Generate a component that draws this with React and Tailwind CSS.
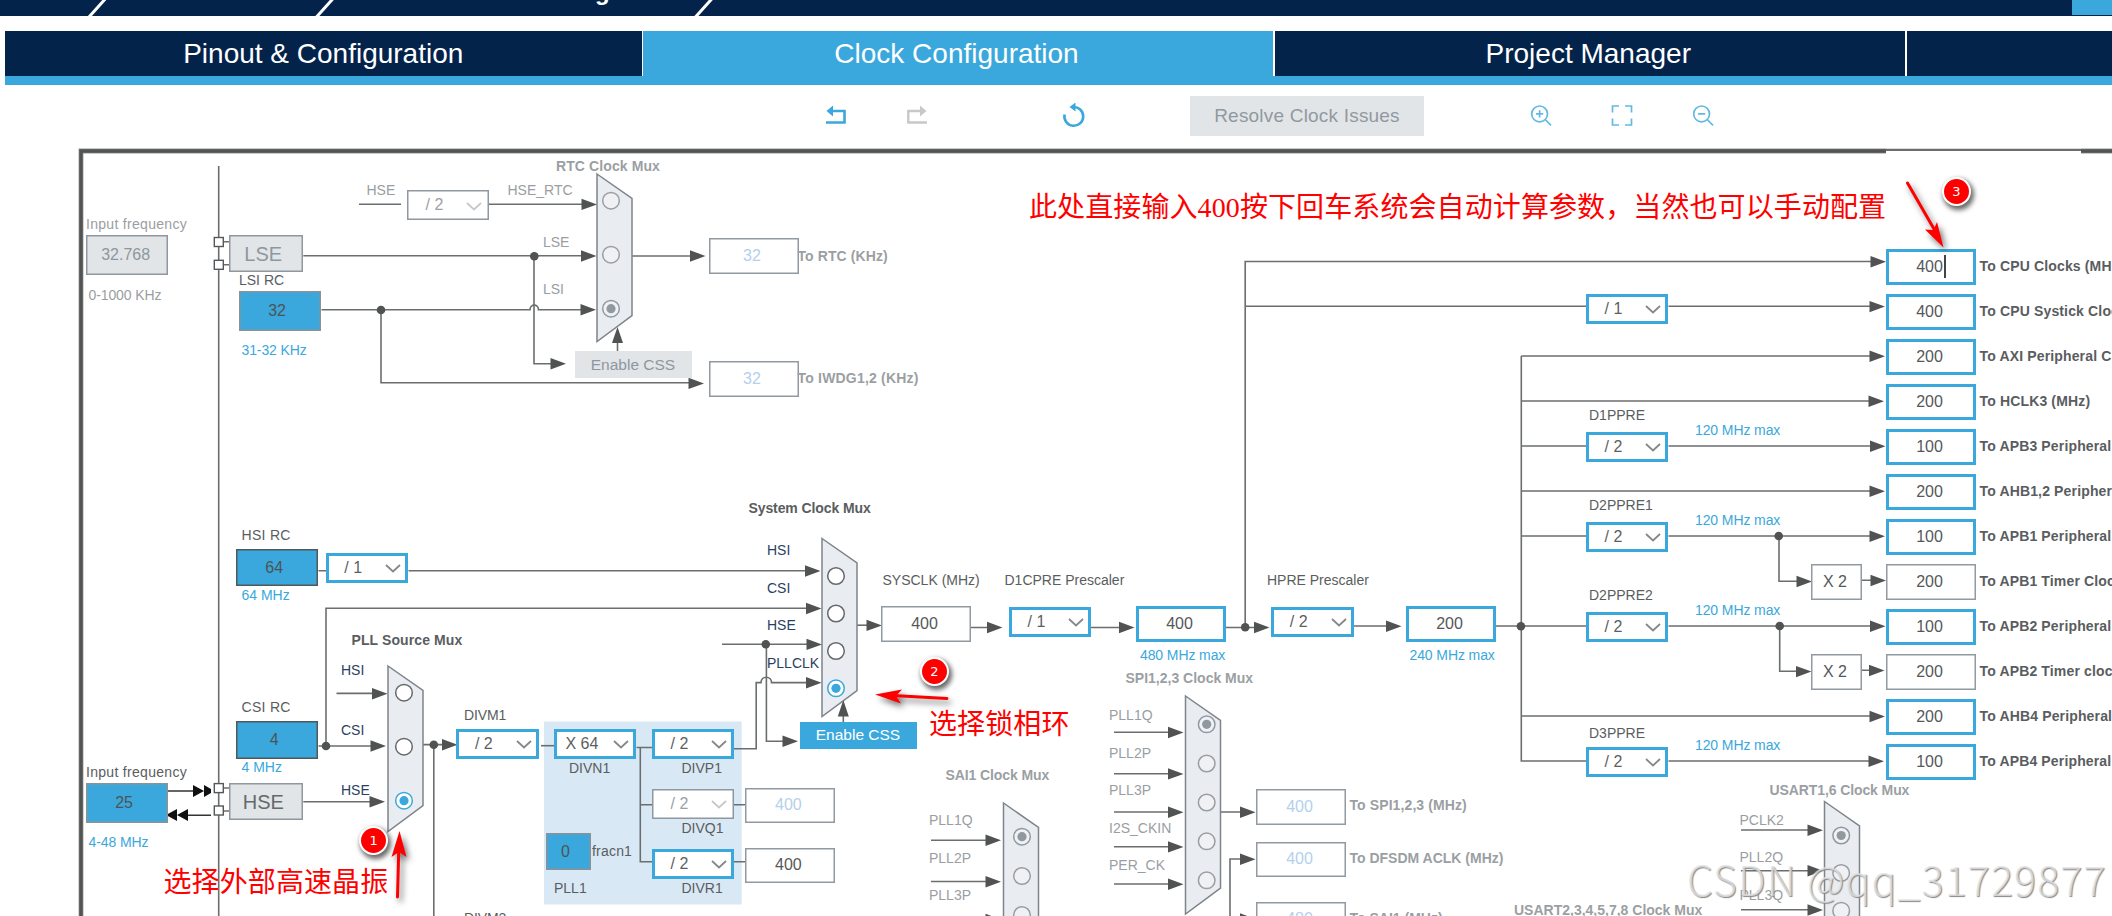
import React from "react";

const LINE = "#6b6e6f";
const ARROW = "#505352";
const BLUE = "#3aa8dc";

const fieldStyles = {
  off: "bg-[#e1e5e8] text-[#8f979e] shadow-[inset_0_0_0_1.5px_#8f989f] pr-[3px]",
  source: "bg-[#3aa8dc] text-[#4c5456] shadow-[inset_0_0_0_1.5px_#8a9298] pr-[6px]",
  sourceDark: "bg-[#3aa8dc] text-[#4c5456] shadow-[inset_0_0_0_1.5px_#50585a] pr-[6px]",
  pale: "bg-white text-[#b4d0ec] shadow-[inset_0_0_0_1.5px_#929aa1] pr-[3px]",
  plain: "bg-white text-[#55585a] shadow-[inset_0_0_0_1.5px_#929aa1] pr-[3px]",
  active: "bg-white text-[#55585a] shadow-[inset_0_0_0_3px_#3aa8dc] pr-[3px]",
};

// [x, y, w, h, kind, value]
const fields = [
  [86, 235.2, 82.4, 40.3, "off", "32.768"],
  [239, 291, 82.2, 40, "source", "32"],
  [708.5, 238.3, 90, 35.6, "pale", "32"],
  [708.5, 361.2, 90, 35.6, "pale", "32"],
  [236, 549, 82.3, 37, "sourceDark", "64"],
  [236, 721.3, 82.3, 37.3, "sourceDark", "4"],
  [86, 783, 82.2, 40, "source", "25"],
  [546, 833, 45, 37, "source", "0"],
  [881, 606, 90, 35.6, "plain", "400"],
  [744.9, 787.5, 90, 35.6, "pale", "400"],
  [744.9, 847.5, 90, 35.6, "plain", "400"],
  [1136, 606, 90, 35.6, "active", "400"],
  [1406, 606, 90, 35.6, "active", "200"],
  [1256, 789.2, 90, 35.6, "pale", "400"],
  [1256, 841.5, 90, 35.6, "pale", "400"],
  [1256, 901.5, 90, 35.6, "pale", "480"],
  [1811, 564, 51, 35.6, "plain", "X 2"],
  [1811, 654, 51, 35.6, "plain", "X 2"],
];

const outputs = [
  ["400", "To CPU Clocks (MHz)"],
  ["400", "To CPU Systick Clocks (MHz)"],
  ["200", "To AXI Peripheral Clocks (MHz)"],
  ["200", "To HCLK3 (MHz)"],
  ["100", "To APB3 Peripheral Clocks (MHz)"],
  ["200", "To AHB1,2 Peripheral Clocks (MHz)"],
  ["100", "To APB1 Peripheral Clocks (MHz)"],
  ["200", "To APB1 Timer Clocks (MHz)", true],
  ["100", "To APB2 Peripheral Clocks (MHz)"],
  ["200", "To APB2 Timer clocks (MHz)", true],
  ["200", "To AHB4 Peripheral Clocks (MHz)"],
  ["100", "To APB4 Peripheral Clocks (MHz)"],
];

// [x, y, value, disabled]
const selects = [
  [407, 190.3, "/ 2", true],
  [325.8, 553.2, "/ 1"],
  [456.4, 729, "/ 2"],
  [554, 729, "X 64"],
  [652, 729, "/ 2"],
  [652, 789, "/ 2", true],
  [652, 849, "/ 2"],
  [1009, 607.2, "/ 1"],
  [1271.3, 607.2, "/ 2"],
  [1586, 294, "/ 1"],
  [1586, 432, "/ 2"],
  [1586, 522, "/ 2"],
  [1586, 612, "/ 2"],
  [1586, 747, "/ 2"],
];

const tones = {
  dark: "text-[#5a5d60]",
  gray: "text-[#9a9ea2]",
  navy: "text-[#2b3f63]",
  blue: "text-[#3aa8dc]",
  title: "text-[#5a5d60] font-bold",
  grayTitle: "text-[#9b9fa3] font-bold",
};

// [x, baseline, text, tone, letter spacing]
const labels = [
  [86, 229.3, "Input frequency", "gray", 0.3],
  [88.5, 299.7, "0-1000 KHz", "gray", -0.1],
  [239, 284.7, "LSI RC", "dark"],
  [241.5, 355, "31-32 KHz", "blue", -0.1],
  [366.5, 194.7, "HSE", "gray"],
  [507.5, 194.7, "HSE_RTC", "gray"],
  [543, 247, "LSE", "gray"],
  [543, 294, "LSI", "gray"],
  [556, 170.5, "RTC Clock Mux", "grayTitle", 0.1],
  [797.5, 261, "To RTC (KHz)", "grayTitle", 0.1],
  [797.5, 382.6, "To IWDG1,2 (KHz)", "grayTitle", 0.2],
  [241.5, 540.2, "HSI RC", "dark", 0.3],
  [241.5, 600, "64 MHz", "blue"],
  [241.5, 712.2, "CSI RC", "dark", 0.3],
  [241.5, 772.4, "4 MHz", "blue"],
  [351.5, 645, "PLL Source Mux", "title", 0.1],
  [341, 674.8, "HSI", "navy"],
  [341, 735, "CSI", "navy"],
  [341, 795, "HSE", "navy"],
  [86, 777, "Input frequency", "dark", 0.3],
  [88.5, 847.3, "4-48 MHz", "blue", -0.1],
  [464, 720, "DIVM1", "dark", -0.1],
  [464, 922.6, "DIVM2", "dark", -0.1],
  [569, 772.7, "DIVN1", "dark"],
  [681.5, 772.7, "DIVP1", "dark"],
  [681.5, 832.7, "DIVQ1", "dark"],
  [681.5, 892.7, "DIVR1", "dark"],
  [592, 855.5, "fracn1", "dark", 0.2],
  [554, 892.5, "PLL1", "dark"],
  [748.5, 512.8, "System Clock Mux", "title", -0.1],
  [767, 555, "HSI", "navy"],
  [767, 592.5, "CSI", "navy"],
  [767, 630, "HSE", "navy"],
  [767, 667.5, "PLLCLK", "navy"],
  [882.5, 585, "SYSCLK (MHz)", "dark"],
  [1004.5, 585, "D1CPRE Prescaler", "dark"],
  [1267, 585, "HPRE Prescaler", "dark"],
  [1140, 660, "480 MHz max", "blue", -0.1],
  [1409.5, 660, "240 MHz max", "blue", -0.1],
  [1125.5, 682.5, "SPI1,2,3 Clock Mux", "grayTitle"],
  [1109, 720, "PLL1Q", "gray"],
  [1109, 757.5, "PLL2P", "gray"],
  [1109, 795, "PLL3P", "gray"],
  [1109, 832.5, "I2S_CKIN", "gray"],
  [1109, 870, "PER_CK", "gray"],
  [1349.5, 810, "To SPI1,2,3 (MHz)", "grayTitle", 0.1],
  [1349.5, 862.5, "To DFSDM ACLK (MHz)", "grayTitle"],
  [1349.5, 922.5, "To SAI1 (MHz)", "grayTitle"],
  [945.5, 780, "SAI1 Clock Mux", "grayTitle", -0.1],
  [929, 825, "PLL1Q", "gray"],
  [929, 862.5, "PLL2P", "gray"],
  [929, 900, "PLL3P", "gray"],
  [1589, 419.7, "D1PPRE", "dark"],
  [1589, 509.7, "D2PPRE1", "dark"],
  [1589, 599.7, "D2PPRE2", "dark"],
  [1589, 737.7, "D3PPRE", "dark"],
  [1695, 435, "120 MHz max", "blue", -0.1],
  [1695, 525, "120 MHz max", "blue", -0.1],
  [1695, 615, "120 MHz max", "blue", -0.1],
  [1695, 750, "120 MHz max", "blue", -0.1],
  [1769.5, 794.5, "USART1,6 Clock Mux", "grayTitle", -0.1],
  [1514, 915, "USART2,3,4,5,7,8 Clock Mux", "grayTitle"],
  [1739.5, 824.5, "PCLK2", "gray"],
  [1739.5, 862, "PLL2Q", "gray"],
  [1739.5, 899.7, "PLL3Q", "gray"],
];

// Trapezoids with their radio buttons: x, top, bottom, radio x, radio ys
const muxes = [
  { x: 597, top: 174, bottom: 341.5, rx: 611, radios: [200.7, 254.7, 308.7], selected: 2, disabled: true },
  { x: 388, top: 666, bottom: 831.5, rx: 404, radios: [692.7, 746.7, 800.7], selected: 2 },
  { x: 822, top: 538.5, bottom: 716.5, rx: 836, radios: [576, 613.5, 651, 688.3], selected: 3 },
  { x: 1185.5, top: 696, bottom: 914, rx: 1206.7, radios: [724.3, 763.5, 802.5, 841.3, 880.3], selected: 0, disabled: true },
  { x: 1003.5, top: 803, bottom: 1020, rx: 1022, radios: [836.7, 876, 915], selected: 0, disabled: true },
  { x: 1824.5, top: 801.5, bottom: 980, rx: 1841.2, radios: [835.5, 873, 910.7], selected: 0, disabled: true },
];

const wires = [
  "M218.7 166V916",
  "M223.5 241.7H229M223.5 264.7H229M223.5 788H229M223.5 811H229",
  "M359 204.2H401M489 204.2H582",
  "M303.3 255.8H582",
  "M321.5 309.8H530C530 303.5 538.5 303.5 538.5 309.8H582",
  "M381 310V382.8H690",
  "M534 256V363.7H551",
  "M617.5 351V342",
  "M632 256H692",
  "M318.5 570.7H326M408.5 570.7H806",
  "M318.5 746H371M326 746V608.2H806",
  "M336.5 693.4H372",
  "M303.3 801.7H370",
  "M423 744.6H443M433.8 744.6V916",
  "M541 745.7H554",
  "M636.5 747.5H652M640.3 747.5V861.7H652M640.3 804.7H652",
  "M734 804.7H745M734 861.7H745",
  "M734 748.8H756.2V682.6H761C761 675.5 771.5 675.5 771.5 682.6H807",
  "M722 644.2H807M766.4 644V741.2H783",
  "M843.3 722V715",
  "M857 625.2H867",
  "M971 627.5H988M1091 627.5H1119M1226 627.5H1255",
  "M1245.2 627V261.5H1872M1245.2 306.3H1586M1668.5 306.3H1871",
  "M1353.5 626H1386M1496 626H1586M1668.5 626H1872",
  "M1521.3 356V761H1586M1668.5 761H1870",
  "M1521.3 356H1871M1521.3 401H1870M1521.3 446H1586M1668.5 446H1872",
  "M1521.3 491H1871M1521.3 536H1586M1668.5 536H1871M1521.3 716H1871",
  "M1779 536V581.3H1799M1779.7 626V671.3H1798",
  "M1862 580.3H1871M1862 670.3H1870",
  "M1114 732.3H1169M1114 773.7H1169M1114 812H1169M1114 846.7H1169M1114 884H1169",
  "M931 840.2H987M931 881.5H987M931 919.5H987",
  "M1221 812H1242M1241 859H1230V916",
  "M1741 830H1808M1741 870.7H1808M1741 909.7H1808",
];

// right pointing arrow heads, by tip
const heads = [
  [597, 204.4], [596.5, 256], [596, 309.8], [566, 363.8], [705.5, 256], [704, 383.4],
  [820.5, 571], [821.5, 608.5], [822, 644.4], [821.5, 682.8], [798, 741.3], [882, 625.4],
  [387.5, 693.8], [386, 746], [385, 801.8], [457.5, 744.7],
  [1002.5, 627.5], [1134.5, 627.5], [1269.5, 627.5], [1401.5, 626.3],
  [1886, 261.8], [1885, 306.6], [1885, 356.3], [1884, 401.3], [1885.5, 446.3], [1885, 491.3],
  [1885, 536.3], [1886, 580.5], [1885.5, 626.3], [1884.5, 670.5], [1885, 716.5], [1884, 761.3],
  [1812, 581.5], [1811.5, 671.6],
  [1183.5, 732.5], [1183.5, 773.9], [1183.5, 812.2], [1183.5, 846.9], [1183.5, 884.2],
  [1001, 840.3], [1001, 881.7], [1001, 919.5], [1255.5, 812.2], [1255.5, 859.2], [1255.5, 919],
  [1823, 830.3], [1823, 870.8], [1823, 910],
];

const dots = [
  [381, 310], [534.3, 256.3], [326, 746], [433.8, 744.7], [765.8, 644.2],
  [1245.2, 627.3], [1520.9, 626.3], [1778.7, 536], [1779.7, 626],
];

function Field({ x, y, w, h, kind, value }) {
  return (
    <div
      className={`absolute flex items-center justify-center text-[16px] leading-none ${fieldStyles[kind]}`}
      style={{ left: x, top: y, width: w, height: h }}
    >
      {value}
    </div>
  );
}

function Select({ x, y, value, disabled }) {
  return (
    <div
      className={`absolute flex h-[29.6px] w-[82.3px] items-center justify-between bg-white pr-[7px] text-[16px] leading-none ${
        value.startsWith("X") ? "pl-[11.5px]" : "pl-[18.5px]"
      } ${
        disabled
          ? "text-[#9ba1a6] shadow-[inset_0_0_0_1.5px_#8f989f]"
          : "text-[#5c5f62] shadow-[inset_0_0_0_3px_#3aa8dc]"
      }`}
      style={{ left: x, top: y }}
    >
      <span className="whitespace-nowrap">{value}</span>
      <svg className="mt-[2px] h-[9px] w-[16px]" viewBox="0 0 16 9" fill="none">
        <path d="M1 1L8 7.5L15 1" stroke={disabled ? "#c6c9cc" : "#85888a"} strokeWidth="1.8" />
      </svg>
    </div>
  );
}

function Label({ x, y, tone, spacing = 0, children }) {
  return (
    <span
      className={`absolute text-[14px] leading-4 whitespace-pre ${tones[tone]}`}
      style={{ left: x, top: y - 13, letterSpacing: spacing }}
    >
      {children}
    </span>
  );
}

function OutputList() {
  return (
    <ul className="absolute top-[249px] left-[1886px] flex flex-col gap-[9px]">
      {outputs.map(([value, name, plain]) => (
        <li key={name} className="flex h-9 items-center gap-[3.5px]">
          <span
            className={`flex h-9 w-[90px] shrink-0 items-center justify-center text-[16px] leading-none ${
              plain ? fieldStyles.plain : fieldStyles.active
            }`}
          >
            {value}
          </span>
          <span className="pb-[3px] text-[14px] leading-4 font-bold tracking-[0.15px] whitespace-nowrap text-[#5a5d60]">
            {name}
          </span>
        </li>
      ))}
    </ul>
  );
}

function Mux({ x, top, bottom, rx, radios, selected, disabled }) {
  const accent = disabled ? "#9199a0" : BLUE;
  return (
    <g>
      <path
        d={`M${x} ${top}L${x + 35} ${top + 24.5}V${bottom - 26}L${x} ${bottom}Z`}
        fill="#e9edf1"
        stroke="#7d848a"
        strokeWidth="1.5"
      />
      {radios.map((cy, i) => (
        <g key={cy}>
          <circle
            cx={rx}
            cy={cy}
            r="8.3"
            fill={disabled ? "#f0f1f4" : "#fff"}
            stroke={i === selected ? accent : disabled ? "#9a9ea2" : "#66696b"}
            strokeWidth="1.5"
          />
          {i === selected && <circle cx={rx} cy={cy} r="4.6" fill={accent} />}
        </g>
      ))}
    </g>
  );
}

function Badge({ x, y, n }) {
  return (
    <div
      className="absolute flex h-[29px] w-[29px] items-center justify-center rounded-full border-[2.5px] border-white bg-[#ff0000] font-['DejaVu_Sans'] text-[13px] leading-none text-white shadow-[2px_3px_5px_1px_rgba(0,0,0,0.6)]"
      style={{ left: x - 14.5, top: y - 14.5 }}
    >
      {n}
    </div>
  );
}

function Note({ x, y, children }) {
  return (
    <p
      className="absolute font-['Liberation_Serif','Noto_Sans_CJK_SC',sans-serif] text-[28px] leading-7 tracking-[0.1px] whitespace-nowrap text-[#ff0000]"
      style={{ left: x, top: y }}
    >
      {children}
    </p>
  );
}

function Tab({ active, className, children }) {
  return (
    <div
      className={`flex h-[45px] shrink-0 items-center justify-center text-[28px] leading-none text-white ${
        active ? "bg-[#3aa8dc]" : "bg-[#03234b]"
      } ${className}`}
    >
      {children}
    </div>
  );
}

function Toolbar() {
  return (
    <div className="flex h-[63px] items-center pb-[1px] pl-[825px]">
      {/* undo */}
      <svg className="mr-[59px] h-[22px] w-[22px]" viewBox="0 0 22 22" fill="none" stroke={BLUE} strokeWidth="2.6">
        <path d="M5 6H19.5V17.5H1" />
        <path d="M8 0.5L1.5 6L8 11.5Z" fill={BLUE} stroke="none" />
      </svg>
      {/* redo */}
      <svg className="h-[22px] w-[22px]" viewBox="0 0 22 22" fill="none" stroke="#c6c8ca" strokeWidth="2.4">
        <path d="M17 6H2.3V17.5H21" />
        <path d="M14 0.5L20.5 6L14 11.5Z" fill="#c6c8ca" stroke="none" />
      </svg>
      {/* reset */}
      <svg className="ml-[133px] h-[26px] w-[26px]" viewBox="0 0 26 26" fill="none" stroke={BLUE} strokeWidth="2.6">
        <path d="M3.6 11.5A9.4 9.4 0 1 0 12 4" />
        <path d="M14.5 -0.5L8.5 4L14.5 8.5Z" fill={BLUE} stroke="none" />
      </svg>
      <button className="ml-[103px] h-10 w-[234px] bg-[#e1e5e8] text-[19px] tracking-[0.2px] text-[#9199a0]">
        Resolve Clock Issues
      </button>
      {/* zoom in */}
      <svg className="ml-[106px] h-[22px] w-[22px]" viewBox="0 0 22 22" fill="none" stroke="#62b9e3" strokeWidth="1.7">
        <circle cx="9.6" cy="8.9" r="7.9" />
        <path d="M15.2 14.5L21 20.3M9.6 5.3V12.5M6 8.9H13.2" />
      </svg>
      {/* fit */}
      <svg className="ml-[59px] h-[22px] w-[22px]" viewBox="0 0 22 22" fill="none" stroke="#62b9e3" strokeWidth="1.7">
        <path d="M8 1H1.5V7.5M14 1H20.5V7.5M20.5 13.5V20H14M8 20H1.5V13.5" />
      </svg>
      {/* zoom out */}
      <svg className="ml-[59px] h-[22px] w-[22px]" viewBox="0 0 22 22" fill="none" stroke="#62b9e3" strokeWidth="1.7">
        <circle cx="9.6" cy="8.9" r="7.9" />
        <path d="M15.2 14.5L21 20.3M6 8.9H13.2" />
      </svg>
    </div>
  );
}

function Schematic() {
  return (
    <svg className="absolute inset-0" width="2112" height="916" viewBox="0 0 2112 916" fill="none">
      {/* chip outline */}
      <path d="M81 916V151H1886M2081 151H2112" stroke="#8f9393" strokeWidth="4.8" />
      <path d="M81 916V151H1886M2081 151H2112" stroke="#515453" strokeWidth="3.4" />
      <path d="M1886 149.8H2081" stroke="#6b6e6e" strokeWidth="2.2" />
      <rect x="544" y="721.5" width="197.7" height="183" fill="#d9e8f5" />

      {wires.map((d) => (
        <path key={d} d={d} stroke={LINE} strokeWidth="1.6" />
      ))}
      {muxes.map((m) => (
        <Mux key={m.x} {...m} />
      ))}
      {heads.map(([x, y]) => (
        <path key={`${x}-${y}`} d={`M${x} ${y}l-15.5 -5.7v11.4z`} fill={ARROW} />
      ))}
      {dots.map(([x, y]) => (
        <circle key={`${x}-${y}`} cx={x} cy={y} r="4.3" fill={ARROW} />
      ))}
      <path d="M617.5 327l-5.5 16h11zM843.3 700l-5.5 16.5h11z" fill={ARROW} />

      {/* oscillator pins */}
      {[237.5, 260.3, 783.6, 806].map((y) => (
        <rect key={y} x="214.3" y={y} width="9" height="9" fill="#fff" stroke="#55585a" strokeWidth="1.4" />
      ))}
      <path d="M168 791H193M211 815.2H186" stroke="#333" strokeWidth="1.5" />
      <path d="M193 785l11 6-11 6zM204 785l7 4v4l-7 4zM188 809l-11 6 11 6zM177 809l-11 6 11 6z" fill="#111" />
    </svg>
  );
}

function RedArrows() {
  return (
    <svg
      className="absolute inset-0 [filter:drop-shadow(3px_4px_3px_rgba(0,0,0,0.55))]"
      width="2112"
      height="916"
      viewBox="0 0 2112 916"
      fill="#ff0000"
    >
      <path d="M397.5 897L398.8 848M947 698.5L893 695.6M1907.5 183L1934 229" stroke="#ff0000" strokeWidth="3" strokeLinecap="round" />
      <path d="M399.5 831L406.5 857L399 852L391.5 857Z" />
      <path d="M875 694.5L902 689.5L896 696L901 703.5Z" />
      <path d="M1943.5 247.5L1925 229.5L1933.5 230L1937 222Z" />
    </svg>
  );
}

export default function App() {
  return (
    <div className="flex h-[916px] w-full flex-col overflow-hidden bg-white font-['Liberation_Sans',Arial,sans-serif]">
      {/* Breadcrumb strip */}
      <div className="relative flex h-4 shrink-0 justify-end overflow-hidden bg-[#03234b]">
        <svg className="absolute inset-0" width="800" height="16" stroke="#fff" strokeWidth="3">
          <path d="M89 17L107 -3M316.5 17L334.5 -3M695.5 17L713.5 -3" />
        </svg>
        <span className="absolute -top-[20px] left-[595px] text-[24px] leading-6 font-bold text-white">g</span>
        <div className="h-[14.5px] w-10 bg-[#3aa8dc]" />
      </div>

      {/* Tabs */}
      <div className="mt-[15px] ml-[5px] flex h-[54px] shrink-0 gap-[1.5px] overflow-hidden border-b-[9px] border-[#3aa8dc]">
        <Tab className="w-[636.5px]">Pinout &amp; Configuration</Tab>
        <Tab active className="w-[630px] pr-[3px]">
          Clock Configuration
        </Tab>
        <Tab className="w-[630.5px] pr-[3px]">Project Manager</Tab>
        <Tab className="w-[630px]" />
      </div>

      <Toolbar />

      {/* Clock tree */}
      <div className="relative min-h-0 flex-1">
        <div className="absolute bottom-0 left-0 h-[916px] w-[2112px] overflow-hidden">
          <Schematic />

          {fields.map(([x, y, w, h, kind, value]) => (
            <Field key={`${x}-${y}`} x={x} y={y} w={w} h={h} kind={kind} value={value} />
          ))}
          <OutputList />
          {selects.map(([x, y, value, disabled]) => (
            <Select key={`${x}-${y}`} x={x} y={y} value={value} disabled={disabled} />
          ))}
          {labels.map(([x, y, text, tone, spacing]) => (
            <Label key={`${x}-${y}`} x={x} y={y} tone={tone} spacing={spacing}>
              {text}
            </Label>
          ))}

          <div className="absolute top-[235px] left-[228.5px] flex h-[37.3px] w-[74.5px] items-center justify-center bg-[#e1e5e8] pr-[5px] text-[20px] leading-none text-[#8f979e] shadow-[inset_0_0_0_1.5px_#8f989f]">
            LSE
          </div>
          <div className="absolute top-[783px] left-[228.5px] flex h-[37.3px] w-[74.5px] items-center justify-center bg-[#e1e5e8] pr-[5px] text-[20px] leading-none text-[#66696c] shadow-[inset_0_0_0_1.5px_#8f989f]">
            HSE
          </div>
          <div className="absolute top-[351px] left-[575px] flex h-[27px] w-[117px] items-center justify-center bg-[#e1e5e8] pr-[1px] text-[15.5px] leading-none text-[#8f979e]">
            Enable CSS
          </div>
          <div className="absolute top-[721.5px] left-[800px] flex h-[27px] w-[117px] items-center justify-center bg-[#3aa8dc] pr-[1px] text-[15.5px] leading-none text-white">
            Enable CSS
          </div>
          <div className="absolute top-[255px] left-[1943.5px] h-[23px] w-[2px] bg-[#444]" />

          {/* Annotations */}
          <RedArrows />
          <Badge x={373.7} y={840.3} n="1" />
          <Badge x={934.5} y={671.5} n="2" />
          <Badge x={1956.5} y={191.5} n="3" />
          <Note x={163.5} y={868.5}>选择外部高速晶振</Note>
          <Note x={929} y={711}>选择锁相环</Note>
          <Note x={1029} y={193.5}>此处直接输入400按下回车系统会自动计算参数，当然也可以手动配置</Note>
          <span className="absolute top-[858px] left-[1687px] font-['Noto_Sans_CJK_SC',sans-serif] text-[41px] leading-10 font-light tracking-[1.2px] whitespace-nowrap text-[#e4e4e4]/80 [text-shadow:1px_1px_1px_#888]">
            CSDN @qq_31729877
          </span>
        </div>
      </div>
    </div>
  );
}
